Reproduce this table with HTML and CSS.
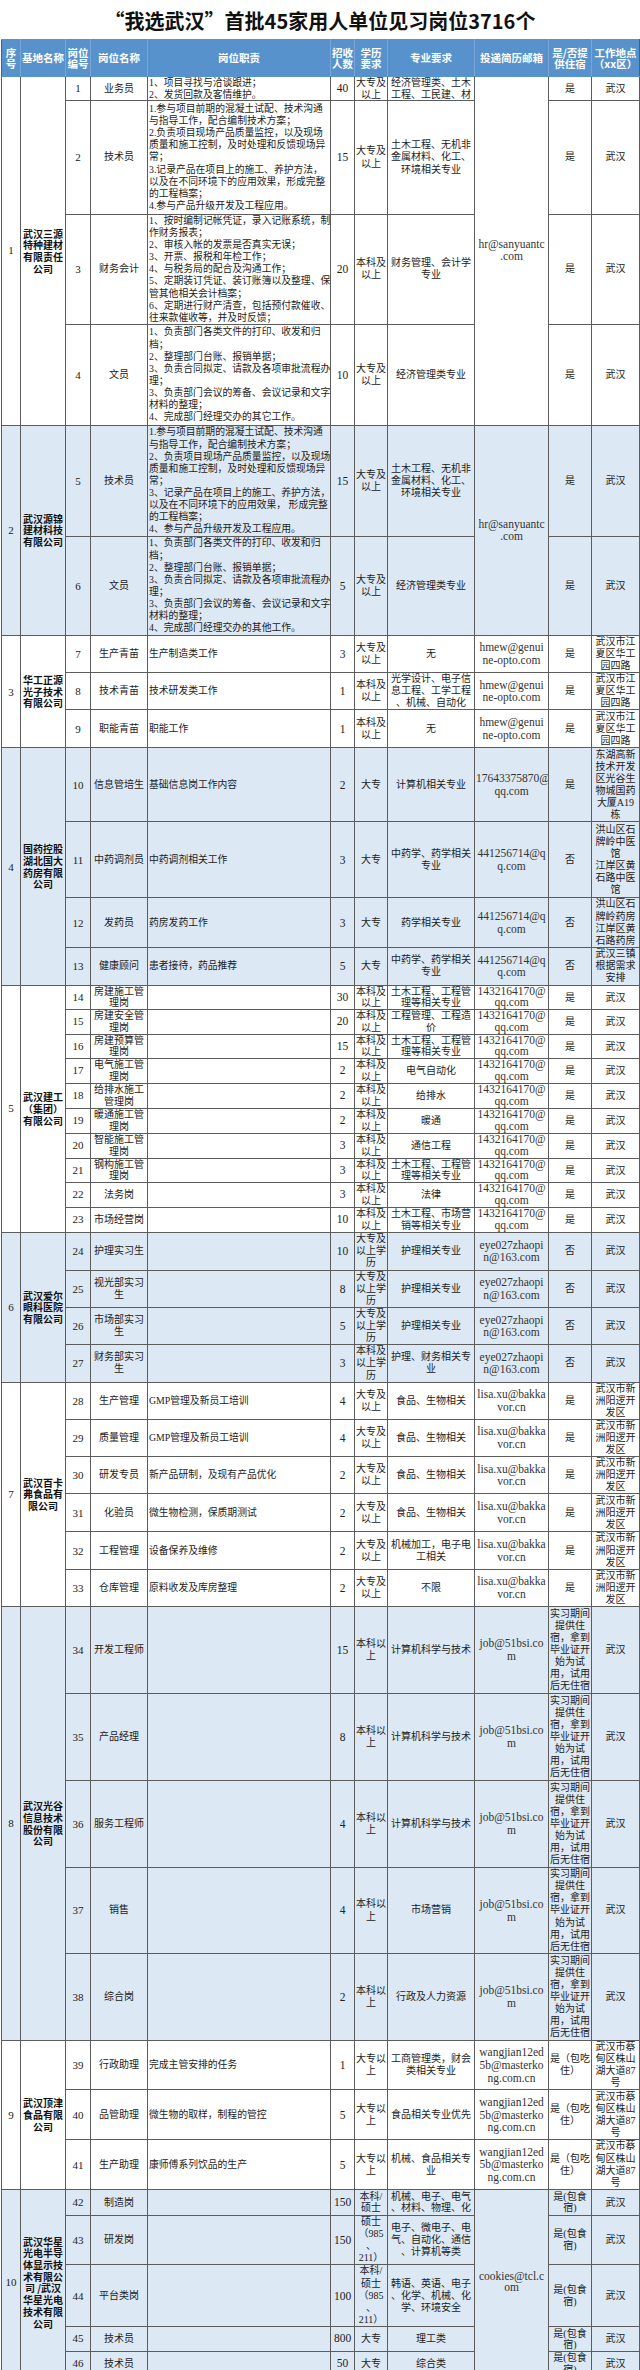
FILE: index.html
```html
<!DOCTYPE html>
<html lang="zh-CN">
<head>
<meta charset="utf-8">
<title>“我选武汉”首批45家用人单位见习岗位3716个</title>
<link rel="stylesheet" href="styles.css">
</head>
<body>
<h1 class="title">“我选武汉”首批45家用人单位见习岗位3716个</h1>
<table class="jobs">
<colgroup>
<col class="c-no"><col class="c-co"><col class="c-id"><col class="c-name"><col class="c-desc"><col class="c-cnt"><col class="c-edu"><col class="c-major"><col class="c-mail"><col class="c-room"><col class="c-loc">
</colgroup>
<thead>
<tr class="head">
<th>序<br>号</th><th>基地名称</th><th>岗位<br>编号</th><th>岗位名称</th><th>岗位职责</th><th>招收<br>人数</th><th>学历<br>要求</th><th>专业要求</th><th>投递简历邮箱</th><th>是/否提<br>供住宿</th><th>工作地点<br>（xx区）</th>
</tr>
</thead>

<tbody>
<tr class="h23 tight">
<td class="n" rowspan="4">1</td>
<td class="co" rowspan="4">武汉三源<br>特种建材<br>有限责任<br>公司</td>
<td class="n">1</td><td>业务员</td>
<td class="d">1、项目寻找与洽谈跟进；<br>2、发货回款及客情维护。</td>
<td class="q">40</td><td>大专及<br>以上</td><td>经济管理类、土木<br>工程、工民建、材</td>
<td class="m" rowspan="4">hr@sanyuantc<br>.com</td><td>是</td><td>武汉</td>
</tr>
<tr class="h114">
<td class="n">2</td><td>技术员</td>
<td class="d">1.参与项目前期的混凝土试配、技术沟通<br>与指导工作，配合编制技术方案；<br>2.负责项目现场产品质量监控，以及现场<br>质量和施工控制，及时处理和反馈现场异<br>常；<br>3.记录产品在项目上的施工、养护方法，<br>以及在不同环境下的应用效果，形成完整<br>的工程档案；<br>4.参与产品升级开发及工程应用。</td>
<td class="q">15</td><td>大专及<br>以上</td><td>土木工程、无机非<br>金属材料、化工、<br>环境相关专业</td><td>是</td><td>武汉</td>
</tr>
<tr class="h109">
<td class="n">3</td><td>财务会计</td>
<td class="d">1、按时编制记帐凭证，录入记账系统，制<br>作财务报表；<br>2、审核入帐的发票是否真实无误；<br>3、开票、报税和年检工作；<br>4、与税务局的配合及沟通工作；<br>5、定期装订凭证、装订账簿以及整理、保<br>管其他相关会计档案；<br>6、定期进行财产清查，包括预付款催收、<br>往来款催收等，并及时反馈；</td>
<td class="q">20</td><td>本科及<br>以上</td><td>财务管理、会计学<br>专业</td><td>是</td><td>武汉</td>
</tr>
<tr class="h101">
<td class="n">4</td><td>文员</td>
<td class="d">1、负责部门各类文件的打印、收发和归<br>档；<br>2、整理部门台账、报销单据；<br>3、负责合同拟定、请款及各项审批流程办<br>理；<br>3、负责部门会议的筹备、会议记录和文字<br>材料的整理；<br>4、完成部门经理交办的其它工作。</td>
<td class="q">10</td><td>大专及<br>以上</td><td>经济管理类专业</td><td>是</td><td>武汉</td>
</tr>
</tbody>

<tbody class="alt">
<tr class="h111">
<td class="n" rowspan="2">2</td>
<td class="co" rowspan="2">武汉源锦<br>建材科技<br>有限公司</td>
<td class="n">5</td><td>技术员</td>
<td class="d">1.参与项目前期的混凝土试配、技术沟通<br>与指导工作，配合编制技术方案；<br>2、负责项目现场产品质量监控，以及现场<br>质量和施工控制，及时处理和反馈现场异<br>常；<br>3、记录产品在项目上的施工、养护方法，<br>以及在不同环境下的应用效果， 形成完整<br>的工程档案；<br>4、参与产品升级开发及工程应用。</td>
<td class="q">15</td><td>大专及<br>以上</td><td>土木工程、无机非<br>金属材料、化工、<br>环境相关专业</td>
<td class="m" rowspan="2">hr@sanyuantc<br>.com</td><td>是</td><td>武汉</td>
</tr>
<tr class="h99">
<td class="n">6</td><td>文员</td>
<td class="d">1、负责部门各类文件的打印、收发和归<br>档；<br>2、整理部门台账、报销单据；<br>3、负责合同拟定、请款及各项审批流程办<br>理；<br>3、负责部门会议的筹备、会议记录和文字<br>材料的整理；<br>4、完成部门经理交办的其他工作。</td>
<td class="q">5</td><td>大专及<br>以上</td><td>经济管理类专业</td><td>是</td><td>武汉</td>
</tr>
</tbody>

<tbody>
<tr class="h37">
<td class="n" rowspan="3">3</td>
<td class="co" rowspan="3">华工正源<br>光子技术<br>有限公司</td>
<td class="n">7</td><td>生产青苗</td><td class="d">生产制造类工作</td>
<td class="q">3</td><td>大专及<br>以上</td><td>无</td><td class="m">hmew@genui<br>ne-opto.com</td><td>是</td><td>武汉市江<br>夏区华工<br>园四路</td>
</tr>
<tr class="h37">
<td class="n">8</td><td>技术青苗</td><td class="d">技术研发类工作</td>
<td class="q">1</td><td>本科及<br>以上</td><td>光学设计、电子信<br>息工程、工学工程<br>、机械、自动化</td><td class="m">hmew@genui<br>ne-opto.com</td><td>是</td><td>武汉市江<br>夏区华工<br>园四路</td>
</tr>
<tr class="h38">
<td class="n">9</td><td>职能青苗</td><td class="d">职能工作</td>
<td class="q">1</td><td>本科及<br>以上</td><td>无</td><td class="m">hmew@genui<br>ne-opto.com</td><td>是</td><td>武汉市江<br>夏区华工<br>园四路</td>
</tr>
</tbody>

<tbody class="alt">
<tr class="h74">
<td class="n" rowspan="4">4</td>
<td class="co" rowspan="4">国药控股<br>湖北国大<br>药房有限<br>公司</td>
<td class="n">10</td><td>信息管培生</td><td class="d">基础信息岗工作内容</td>
<td class="q">2</td><td>大专</td><td>计算机相关专业</td><td class="m">17643375870@<br>qq.com</td><td>是</td><td>东湖高新<br>技术开发<br>区光谷生<br>物城国药<br>大厦A19<br>栋</td>
</tr>
<tr class="h76">
<td class="n">11</td><td>中药调剂员</td><td class="d">中药调剂相关工作</td>
<td class="q">3</td><td>大专</td><td>中药学、药学相关<br>专业</td><td class="m">441256714@q<br>q.com</td><td>否</td><td>洪山区石<br>牌岭中医<br>馆<br>江岸区黄<br>石路中医<br>馆</td>
</tr>
<tr class="h49">
<td class="n">12</td><td>发药员</td><td class="d">药房发药工作</td>
<td class="q">3</td><td>大专</td><td>药学相关专业</td><td class="m">441256714@q<br>q.com</td><td>否</td><td>洪山区石<br>牌岭药房<br>江岸区黄<br>石路药房</td>
</tr>
<tr class="h38">
<td class="n">13</td><td>健康顾问</td><td class="d">患者接待，药品推荐</td>
<td class="q">5</td><td>大专</td><td>中药学、药学相关<br>专业</td><td class="m">441256714@q<br>q.com</td><td>否</td><td>武汉三镇<br>根据需求<br>安排</td>
</tr>
</tbody>

<tbody>
<tr class="h24 tight">
<td class="n" rowspan="10">5</td>
<td class="co" rowspan="10">武汉建工<br>（集团）<br>有限公司</td>
<td class="n">14</td><td>房建施工管<br>理岗</td><td class="d"></td>
<td class="q">30</td><td>本科及<br>以上</td><td>土木工程、工程管<br>理等相关专业</td><td class="m">1432164170@<br>qq.com</td><td>是</td><td>武汉</td>
</tr>
<tr class="h25 tight">
<td class="n">15</td><td>房建安全管<br>理岗</td><td class="d"></td>
<td class="q">20</td><td>本科及<br>以上</td><td>工程管理、工程造<br>价</td><td class="m">1432164170@<br>qq.com</td><td>是</td><td>武汉</td>
</tr>
<tr class="h24 tight">
<td class="n">16</td><td>房建预算管<br>理岗</td><td class="d"></td>
<td class="q">15</td><td>本科及<br>以上</td><td>土木工程、工程管<br>理等相关专业</td><td class="m">1432164170@<br>qq.com</td><td>是</td><td>武汉</td>
</tr>
<tr class="h25 tight">
<td class="n">17</td><td>电气施工管<br>理岗</td><td class="d"></td>
<td class="q">2</td><td>本科及<br>以上</td><td>电气自动化</td><td class="m">1432164170@<br>qq.com</td><td>是</td><td>武汉</td>
</tr>
<tr class="h25 tight">
<td class="n">18</td><td>给排水施工<br>管理岗</td><td class="d"></td>
<td class="q">2</td><td>本科及<br>以上</td><td>给排水</td><td class="m">1432164170@<br>qq.com</td><td>是</td><td>武汉</td>
</tr>
<tr class="h25 tight">
<td class="n">19</td><td>暖通施工管<br>理岗</td><td class="d"></td>
<td class="q">2</td><td>本科及<br>以上</td><td>暖通</td><td class="m">1432164170@<br>qq.com</td><td>是</td><td>武汉</td>
</tr>
<tr class="h25 tight">
<td class="n">20</td><td>智能施工管<br>理岗</td><td class="d"></td>
<td class="q">3</td><td>本科及<br>以上</td><td>通信工程</td><td class="m">1432164170@<br>qq.com</td><td>是</td><td>武汉</td>
</tr>
<tr class="h24 tight">
<td class="n">21</td><td>钢构施工管<br>理岗</td><td class="d"></td>
<td class="q">3</td><td>本科及<br>以上</td><td>土木工程、工程管<br>理等相关专业</td><td class="m">1432164170@<br>qq.com</td><td>是</td><td>武汉</td>
</tr>
<tr class="h25 tight">
<td class="n">22</td><td>法务岗</td><td class="d"></td>
<td class="q">3</td><td>本科及<br>以上</td><td>法律</td><td class="m">1432164170@<br>qq.com</td><td>是</td><td>武汉</td>
</tr>
<tr class="h25 tight">
<td class="n">23</td><td>市场经营岗</td><td class="d"></td>
<td class="q">10</td><td>本科及<br>以上</td><td>土木工程、市场营<br>销等相关专业</td><td class="m">1432164170@<br>qq.com</td><td>是</td><td>武汉</td>
</tr>
</tbody>

<tbody class="alt">
<tr class="h38">
<td class="n" rowspan="4">6</td>
<td class="co" rowspan="4">武汉爱尔<br>眼科医院<br>有限公司</td>
<td class="n">24</td><td>护理实习生</td><td class="d"></td>
<td class="q">10</td><td>大专及<br>以上学<br>历</td><td>护理相关专业</td><td class="m">eye027zhaopi<br>n@163.com</td><td>否</td><td>武汉</td>
</tr>
<tr class="h37">
<td class="n">25</td><td>视光部实习<br>生</td><td class="d"></td>
<td class="q">8</td><td>大专及<br>以上学<br>历</td><td>护理相关专业</td><td class="m">eye027zhaopi<br>n@163.com</td><td>否</td><td>武汉</td>
</tr>
<tr class="h37">
<td class="n">26</td><td>市场部实习<br>生</td><td class="d"></td>
<td class="q">5</td><td>大专及<br>以上学<br>历</td><td>护理相关专业</td><td class="m">eye027zhaopi<br>n@163.com</td><td>否</td><td>武汉</td>
</tr>
<tr class="h37">
<td class="n">27</td><td>财务部实习<br>生</td><td class="d"></td>
<td class="q">3</td><td>本科及<br>以上学<br>历</td><td>护理、财务相关专<br>业</td><td class="m">eye027zhaopi<br>n@163.com</td><td>否</td><td>武汉</td>
</tr>
</tbody>

<tbody>
<tr class="h37">
<td class="n" rowspan="6">7</td>
<td class="co" rowspan="6">武汉百卡<br>弗食品有<br>限公司</td>
<td class="n">28</td><td>生产管理</td><td class="d">GMP管理及新员工培训</td>
<td class="q">4</td><td>大专及<br>以上</td><td>食品、生物相关</td><td class="m">lisa.xu@bakka<br>vor.cn</td><td>是</td><td>武汉市新<br>洲阳逻开<br>发区</td>
</tr>
<tr class="h37">
<td class="n">29</td><td>质量管理</td><td class="d">GMP管理及新员工培训</td>
<td class="q">4</td><td>大专及<br>以上</td><td>食品、生物相关</td><td class="m">lisa.xu@bakka<br>vor.cn</td><td>是</td><td>武汉市新<br>洲阳逻开<br>发区</td>
</tr>
<tr class="h37">
<td class="n">30</td><td>研发专员</td><td class="d">新产品研制，及现有产品优化</td>
<td class="q">2</td><td>大专及<br>以上</td><td>食品、生物相关</td><td class="m">lisa.xu@bakka<br>vor.cn</td><td>是</td><td>武汉市新<br>洲阳逻开<br>发区</td>
</tr>
<tr class="h38">
<td class="n">31</td><td>化验员</td><td class="d">微生物检测，保质期测试</td>
<td class="q">2</td><td>大专及<br>以上</td><td>食品、生物相关</td><td class="m">lisa.xu@bakka<br>vor.cn</td><td>是</td><td>武汉市新<br>洲阳逻开<br>发区</td>
</tr>
<tr class="h37">
<td class="n">32</td><td>工程管理</td><td class="d">设备保养及维修</td>
<td class="q">2</td><td>大专及<br>以上</td><td>机械加工，电子电<br>工相关</td><td class="m">lisa.xu@bakka<br>vor.cn</td><td>是</td><td>武汉市新<br>洲阳逻开<br>发区</td>
</tr>
<tr class="h37">
<td class="n">33</td><td>仓库管理</td><td class="d">原料收发及库房整理</td>
<td class="q">2</td><td>大专及<br>以上</td><td>不限</td><td class="m">lisa.xu@bakka<br>vor.cn</td><td>是</td><td>武汉市新<br>洲阳逻开<br>发区</td>
</tr>
</tbody>

<tbody class="alt">
<tr class="h87">
<td class="n" rowspan="5">8</td>
<td class="co" rowspan="5">武汉光谷<br>信息技术<br>股份有限<br>公司</td>
<td class="n">34</td><td>开发工程师</td><td class="d"></td>
<td class="q">15</td><td>本科以<br>上</td><td>计算机科学与技术</td><td class="m">job@51bsi.co<br>m</td><td>实习期间<br>提供住<br>宿，拿到<br>毕业证开<br>始为试<br>用，试用<br>后无住宿</td><td>武汉</td>
</tr>
<tr class="h87">
<td class="n">35</td><td>产品经理</td><td class="d"></td>
<td class="q">8</td><td>本科以<br>上</td><td>计算机科学与技术</td><td class="m">job@51bsi.co<br>m</td><td>实习期间<br>提供住<br>宿，拿到<br>毕业证开<br>始为试<br>用，试用<br>后无住宿</td><td>武汉</td>
</tr>
<tr class="h87">
<td class="n">36</td><td>服务工程师</td><td class="d"></td>
<td class="q">4</td><td>本科以<br>上</td><td>计算机科学与技术</td><td class="m">job@51bsi.co<br>m</td><td>实习期间<br>提供住<br>宿，拿到<br>毕业证开<br>始为试<br>用，试用<br>后无住宿</td><td>武汉</td>
</tr>
<tr class="h86">
<td class="n">37</td><td>销售</td><td class="d"></td>
<td class="q">4</td><td>本科以<br>上</td><td>市场营销</td><td class="m">job@51bsi.co<br>m</td><td>实习期间<br>提供住<br>宿，拿到<br>毕业证开<br>始为试<br>用，试用<br>后无住宿</td><td>武汉</td>
</tr>
<tr class="h87">
<td class="n">38</td><td>综合岗</td><td class="d"></td>
<td class="q">2</td><td>本科以<br>上</td><td>行政及人力资源</td><td class="m">job@51bsi.co<br>m</td><td>实习期间<br>提供住<br>宿，拿到<br>毕业证开<br>始为试<br>用，试用<br>后无住宿</td><td>武汉</td>
</tr>
</tbody>

<tbody>
<tr class="h49">
<td class="n" rowspan="3">9</td>
<td class="co" rowspan="3">武汉顶津<br>食品有限<br>公司</td>
<td class="n">39</td><td>行政助理</td><td class="d">完成主管安排的任务</td>
<td class="q">1</td><td>大专以<br>上</td><td>工商管理类，财会<br>类相关专业</td><td class="m">wangjian12ed<br>5b@masterko<br>ng.com.cn</td><td>是（包吃<br>住）</td><td>武汉市蔡<br>甸区株山<br>湖大道87<br>号</td>
</tr>
<tr class="h50">
<td class="n">40</td><td>品管助理</td><td class="d">微生物的取样，制程的管控</td>
<td class="q">5</td><td>大专以<br>上</td><td>食品相关专业优先</td><td class="m">wangjian12ed<br>5b@masterko<br>ng.com.cn</td><td>是（包吃<br>住）</td><td>武汉市蔡<br>甸区株山<br>湖大道87<br>号</td>
</tr>
<tr class="h49">
<td class="n">41</td><td>生产助理</td><td class="d">康师傅系列饮品的生产</td>
<td class="q">5</td><td>大专以<br>上</td><td>机械、食品相关专<br>业</td><td class="m">wangjian12ed<br>5b@masterko<br>ng.com.cn</td><td>是（包吃<br>住）</td><td>武汉市蔡<br>甸区株山<br>湖大道87<br>号</td>
</tr>
</tbody>

<tbody class="alt">
<tr class="h26 tight">
<td class="n" rowspan="5">10</td>
<td class="co" rowspan="5">武汉华星<br>光电半导<br>体显示技<br>术有限公<br>司 /武汉<br>华星光电<br>技术有限<br>公司</td>
<td class="n">42</td><td>制造岗</td><td class="d"></td>
<td class="q">150</td><td>本科/<br>硕士</td><td>机械、电子、电气<br>、材料、物理、化</td>
<td class="m" rowspan="5">cookies@tcl.c<br>om</td><td>是(包食<br>宿)</td><td>武汉</td>
</tr>
<tr class="h49">
<td class="n">43</td><td>研发岗</td><td class="d"></td>
<td class="q">150</td><td>硕士<br>（985<br>、<br>211）</td><td>电子、微电子、电<br>气、自动化、通信<br>、计算机等类</td><td>是(包食<br>宿)</td><td>武汉</td>
</tr>
<tr class="h62">
<td class="n">44</td><td>平台类岗</td><td class="d"></td>
<td class="q">100</td><td>本科/<br>硕士<br>（985<br>、<br>211）</td><td>韩语、英语、电子<br>、化学、机械、化<br>学、环境安全</td><td>是(包食<br>宿)</td><td>武汉</td>
</tr>
<tr class="h25 tight">
<td class="n">45</td><td>技术员</td><td class="d"></td>
<td class="q">800</td><td>大专</td><td>理工类</td><td>是(包食<br>宿)</td><td>武汉</td>
</tr>
<tr class="h24 tight">
<td class="n">46</td><td>技术员</td><td class="d"></td>
<td class="q">50</td><td>大专</td><td>综合类</td><td>是(包食<br>宿)</td><td>武汉</td>
</tr>
</tbody>
</table>
</body>
</html>
```

FILE: styles.css
```css
html, body {
  margin: 0;
  padding: 0;
  background: #ffffff;
}

body {
  width: 640px;
  font-family: "Liberation Serif", "Noto Sans CJK SC", serif;
  color: #222222;
}

.title {
  margin: 0;
  height: 39px;
  box-sizing: border-box;
  padding-top: 2px;
  line-height: 37px;
  text-align: center;
  font-family: "Noto Sans CJK SC", sans-serif;
  font-weight: 700;
  font-size: 20px;
  color: #111111;
}

.jobs {
  margin-left: 1px;
  width: 638px;
  table-layout: fixed;
  border-collapse: collapse;
  font-size: 10px;
  line-height: 12.1px;
}

.c-no { width: 19px; }
.c-co { width: 45px; }
.c-id { width: 25px; }
.c-name { width: 57px; }
.c-desc { width: 183px; }
.c-cnt { width: 24px; }
.c-edu { width: 33px; }
.c-major { width: 87px; }
.c-mail { width: 74px; }
.c-room { width: 43px; }
.c-loc { width: 48px; }

.jobs th,
.jobs td {
  border: 1px solid #5c5c5c;
  padding: 0 1px;
  text-align: center;
  vertical-align: middle;
  white-space: nowrap;
  overflow: hidden;
}

.jobs th {
  height: 36px;
  background: #5892cc;
  border-color: #5892cc #7aa6d6;
  color: #ffffff;
  font-family: "Noto Sans CJK SC", sans-serif;
  font-weight: 700;
  font-size: 10.5px;
  line-height: 11.5px;
}

.jobs th:first-child { border-left-color: #5c5c5c; }
.jobs th:last-child { border-right-color: #5c5c5c; }

.alt td {
  background: #dce8f4;
}

.jobs td.d {
  text-align: left;
  padding: 0 0 0 1px;
  font-size: 9.8px;
}

.jobs td.co {
  font-family: "Noto Sans CJK SC", sans-serif;
  font-weight: 700;
  line-height: 11.7px;
  color: #111111;
  padding: 0;
}

.jobs td.n {
  font-size: 11px;
}

.jobs td.q {
  font-size: 11.5px;
}

.jobs td.m {
  font-size: 11.5px;
  line-height: 12.6px;
  color: #333333;
}

.tight td,
.tight td.m {
  line-height: 11.5px;
}

.h23 { height: 23px; }
.h24 { height: 24px; }
.h25 { height: 25px; }
.h26 { height: 26px; }
.h37 { height: 37px; }
.h38 { height: 38px; }
.h49 { height: 49px; }
.h50 { height: 50px; }
.h62 { height: 62px; }
.h74 { height: 74px; }
.h76 { height: 76px; }
.h86 { height: 86px; }
.h87 { height: 87px; }
.h99 { height: 99px; }
.h101 { height: 101px; }
.h109 { height: 109px; }
.h111 { height: 111px; }
.h114 { height: 114px; }
```
